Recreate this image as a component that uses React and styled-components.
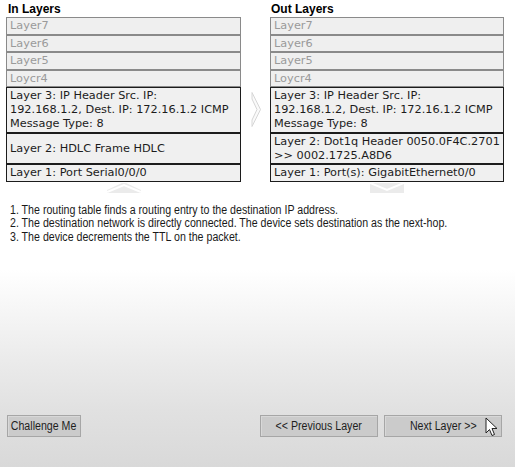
import React from "react";
import styled, { createGlobalStyle } from "styled-components";

const GlobalStyle = createGlobalStyle`
  html, body {
    margin: 0;
    padding: 0;
    height: 100%;
  }
  body {
    font-family: "DejaVu Sans", Verdana, sans-serif;
  }
`;

const Page = styled.div`
  min-height: 100vh;
  box-sizing: border-box;
  display: flex;
  flex-direction: column;
  background: linear-gradient(
    to bottom,
    #ffffff 0,
    #ffffff 270px,
    #f6f6f6 310px,
    #ebebeb 360px,
    #e1e1e1 410px,
    #d9d9d9 100%
  );
`;

const Panels = styled.div`
  display: grid;
  grid-template-columns: 235px 29px 234px;
  padding-left: 6px;
`;

const Heading = styled.h3`
  margin: 0;
  padding: ${p => (p.$right ? "3px 0 0 1px" : "3px 0 0 2px")};
  height: 14px;
  font-family: "Liberation Sans", Arial, sans-serif;
  font-size: 12px;
  font-weight: 700;
  line-height: 13px;
  color: #000;
`;

const LayerBox = styled.div`
  display: flex;
  align-items: center;
  border: 1px solid ${p => (p.$active ? "#1c1c1c" : "#8a8a8a")};
  background: ${p => (p.$active ? "#f0f0f0" : "#efefef")};
  color: ${p => (p.$active ? "#1c1c1c" : "#9a9a9a")};
  padding: 1px 0 0.5px 3px;
  font-size: 11.3px;
  line-height: 14px;
  white-space: nowrap;
  overflow: visible;
`;

const Gutter = styled.div`
  display: flex;
  align-items: center;
  justify-content: center;
`;

const ArrowCell = styled.div`
  display: flex;
  justify-content: center;
  height: 11px;
`;

const Notes = styled.ol`
  margin: 11px 0 0;
  padding: 0 0 0 10px;
  list-style: none;
  font-family: "Liberation Sans", Arial, sans-serif;
  font-size: 12.5px;
  line-height: 13.5px;
  color: #1a1a1a;
`;

/* the original UI font is a narrow sans; squeeze the regular one to match */
const Narrow = styled.span`
  display: inline-block;
  flex: none;
  white-space: nowrap;
  transform: scaleX(0.85);
  transform-origin: ${p => (p.$center ? "center" : "left")};
`;

const Note = styled.li`
  white-space: nowrap;
`;

const ButtonBar = styled.div`
  margin-top: auto;
  display: flex;
  align-items: center;
  gap: 6px;
  padding: 0 13px 30px 7px;
`;

const Spacer = styled.div`
  flex: 1;
`;

const Button = styled.button`
  position: relative;
  display: flex;
  align-items: center;
  justify-content: center;
  width: ${p => p.$w}px;
  height: 22px;
  padding: 0;
  border: 1px solid #a6a6a6;
  box-shadow: inset 1px 1px 0 #d8d8d8;
  background: #cbcbcb;
  color: #1e1e1e;
  font-family: "Liberation Sans", Arial, sans-serif;
  font-size: 12.5px;
  line-height: 20px;
  white-space: nowrap;
  overflow: visible;
  cursor: pointer;
`;

const Cursor = styled.svg`
  position: absolute;
  left: 100px;
  top: 1px;
`;

const layers = [
  { in: ["Layer7"], out: ["Layer7"] },
  { in: ["Layer6"], out: ["Layer6"] },
  { in: ["Layer5"], out: ["Layer5"] },
  { in: ["Loycr4"], out: ["Loycr4"] },
  {
    in: ["Layer 3: IP Header Src. IP:", "192.168.1.2, Dest. IP: 172.16.1.2 ICMP", "Message Type: 8"],
    out: ["Layer 3: IP Header Src. IP:", "192.168.1.2, Dest. IP: 172.16.1.2 ICMP", "Message Type: 8"],
    active: true,
    arrow: true,
  },
  {
    in: ["Layer 2: HDLC Frame HDLC"],
    out: ["Layer 2: Dot1q Header 0050.0F4C.2701", ">> 0002.1725.A8D6"],
    active: true,
  },
  {
    in: ["Layer 1: Port Serial0/0/0"],
    out: ["Layer 1: Port(s): GigabitEthernet0/0"],
    active: true,
  },
];

const notes = [
  "1. The routing table finds a routing entry to the destination IP address.",
  "2. The destination network is directly connected. The device sets destination as the next-hop.",
  "3. The device decrements the TTL on the packet.",
];

const Lines = ({ lines }) => (
  <div>
    {lines.map((l, i) => (
      <React.Fragment key={i}>
        {i > 0 && <br />}
        {l}
      </React.Fragment>
    ))}
  </div>
);

const RightArrow = () => (
  <svg width="10" height="35" viewBox="0 0 10 35">
    <polygon
      points="1,0.5 9.5,17.5 1,34.5 1,28 6,17.5 1,7"
      fill="#fafafa"
      stroke="#d6d6d6"
      strokeWidth="1"
    />
  </svg>
);

const TabArrow = ({ down }) => (
  <svg width="34" height="11" viewBox="0 0 34 11">
    <rect x="0" y="1" width="34" height="10" fill="#ebebeb" />
    {down ? (
      <polyline points="0,1 17,8 34,1" fill="none" stroke="#ffffff" strokeWidth="2" />
    ) : (
      <>
        <polygon points="0,0 17,0 0,8" fill="#ffffff" />
        <polygon points="34,0 17,0 34,8" fill="#ffffff" />
        <polyline points="0,10 17,3 34,10" fill="none" stroke="#ffffff" strokeWidth="2" />
      </>
    )}
  </svg>
);

const App = () => {
  return (
    <>
      <GlobalStyle />
      <Page>
        <Panels>
          <Heading>In Layers</Heading>
          <div />
          <Heading $right>Out Layers</Heading>
          {layers.map((row, i) => (
            <React.Fragment key={i}>
              <LayerBox $active={row.active}>
                <Lines lines={row.in} />
              </LayerBox>
              <Gutter>{row.arrow && <RightArrow />}</Gutter>
              <LayerBox $active={row.active}>
                <Lines lines={row.out} />
              </LayerBox>
            </React.Fragment>
          ))}
          <ArrowCell>
            <TabArrow />
          </ArrowCell>
          <div />
          <ArrowCell>
            <TabArrow down />
          </ArrowCell>
        </Panels>

        <Notes>
          {notes.map(n => (
            <Note key={n}>
              <Narrow>{n}</Narrow>
            </Note>
          ))}
        </Notes>

        <ButtonBar>
          <Button $w={74}>
            <Narrow $center>Challenge Me</Narrow>
          </Button>
          <Spacer />
          <Button $w={118}>
            <Narrow $center>&lt;&lt; Previous Layer</Narrow>
          </Button>
          <Button $w={118}>
            <Narrow $center>Next Layer &gt;&gt;</Narrow>
            <Cursor width="13" height="20" viewBox="0 0 13 20">
              <path
                d="M1 1 L1 16 L4.5 12.5 L7 18.5 L9.5 17.5 L7 11.5 L12 11.5 Z"
                fill="#ffffff"
                stroke="#222"
                strokeWidth="1"
                strokeLinejoin="round"
              />
            </Cursor>
          </Button>
        </ButtonBar>
      </Page>
    </>
  );
};

export default App;
